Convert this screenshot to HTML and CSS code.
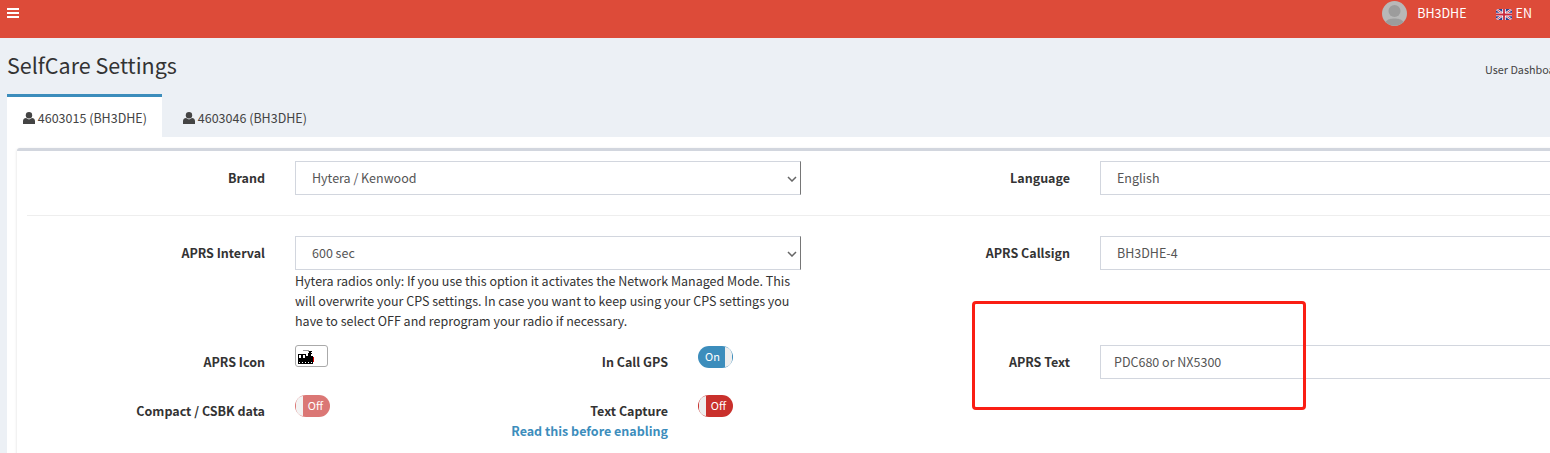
FILE: index.html
```html
<!DOCTYPE html>
<html lang="en">
<head>
<meta charset="utf-8">
<title>SelfCare Settings</title>
<link rel="stylesheet" href="styles.css">
</head>
<body>
<header class="navbar">
  <svg class="bars" viewBox="0 0 12 10" width="12" height="10"><path d="M0 0h12v2H0zM0 4h12v2H0zM0 8h12v2H0z" fill="#fff"/></svg>
  <div class="nav-right">
    <svg class="avatar" viewBox="0 0 25 25" width="25" height="25"><circle cx="12.500" cy="12.500" r="12.500" fill="#b8b8b8"/><circle cx="12.500" cy="10" r="6" fill="#9c9c9c"/><path d="M3.500 21c2-3 5.500-3.500 9-3.500s7 .5 9 3.500a12.500 12.500 0 0 1-18 0z" fill="#9c9c9c"/></svg>
    <span class="user">BH3DHE</span>
    <svg class="flag" viewBox="0 0 16 11" width="16" height="11"><rect width="16" height="11" fill="#2b3f8f"/><path d="M0 0l16 11M16 0L0 11" stroke="#fff" stroke-width="2.200"/><path d="M0 0l16 11M16 0L0 11" stroke="#c8283c" stroke-width=".9"/><path d="M8 0v11M0 5.500h16" stroke="#fff" stroke-width="3.500"/><path d="M8 0v11M0 5.500h16" stroke="#c8283c" stroke-width="1.800"/></svg>
    <span class="lang">EN</span>
  </div>
</header>

<section class="page-head">
  <h1>SelfCare Settings</h1>
  <span class="crumb">User Dashboard</span>
</section>

<nav class="tabs">
  <a class="tab active"><svg class="ico" viewBox="0 0 12 12" width="12" height="12"><circle cx="6" cy="3.200" r="3.200" fill="#444"/><path d="M0 12V9c0-2 1.500-3 3-3l3 1.500L9 6c1.500 0 3 1 3 3v3z" fill="#444"/></svg> 4603015 (BH3DHE)</a>
  <a class="tab"><svg class="ico" viewBox="0 0 12 12" width="12" height="12"><circle cx="6" cy="3.200" r="3.200" fill="#444"/><path d="M0 12V9c0-2 1.500-3 3-3l3 1.500L9 6c1.500 0 3 1 3 3v3z" fill="#444"/></svg> 4603046 (BH3DHE)</a>
</nav>

<main class="tab-content">
  <div class="box">
    <div class="row">
      <label class="lbl">Brand</label>
      <div class="select">Hytera / Kenwood<svg class="chev" viewBox="0 0 10 6" width="10" height="6"><path d="M1 1l4 4 4-4" fill="none" stroke="#666" stroke-width="1.500"/></svg></div>
      <label class="lbl">Language</label>
      <div class="input">English</div>
    </div>
    <hr class="sep">
    <div class="row">
      <label class="lbl">APRS Interval</label>
      <div class="select">600 sec<svg class="chev" viewBox="0 0 10 6" width="10" height="6"><path d="M1 1l4 4 4-4" fill="none" stroke="#666" stroke-width="1.500"/></svg></div>
      <label class="lbl">APRS Callsign</label>
      <div class="input">BH3DHE-4</div>
    </div>
    <div class="row row-help">
      <p class="help">Hytera radios only: If you use this option it activates the Network Managed Mode. This will overwrite your CPS settings. In case you want to keep using your CPS settings you have to select OFF and reprogram your radio if necessary.</p>
    </div>
    <div class="row row-last">
      <div class="nested">
        <label class="lbl cell-lbl">APRS Icon</label>
        <button class="icon-btn" type="button"><svg viewBox="0 0 16 16" width="16" height="16" shape-rendering="crispEdges"><path d="M5 1h6v1H5zM10 2h2v1h-2z" fill="#999"/><path d="M11 2h3v1h-1v1h1v1h-1v3h-3V4h1z" fill="#000"/><path d="M0 5h8v2h7v5H0z" fill="#000"/><path d="M1 6h2v3H1zM5 6h2v3H5z" fill="#fff"/><path d="M0 12h15v3H0z" fill="#000"/><path d="M1 13h1v1H1zM4 13h1v1H4zM7 13h1v1H7zM10 13h1v1h-1zM13 13h1v1h-1z" fill="#fff"/><path d="M15 8h1v5h-1z" fill="#d00"/></svg></button>
        <label class="lbl cell-lbl">In Call GPS</label>
        <div class="toggle on"><span class="tg-text">On</span><span class="knob"></span></div>
        <label class="lbl cell-lbl">Compact / CSBK data</label>
        <div class="toggle off faded"><span class="knob"></span><span class="tg-text">Off</span></div>
        <div class="lbl cell-lbl">Text Capture<a class="link">Read this before enabling</a></div>
        <div class="toggle off"><span class="knob"></span><span class="tg-text">Off</span></div>
      </div>
      <label class="lbl lbl-text">APRS Text</label>
      <div class="input input-tight">PDC680 or NX5300</div>
    </div>
  </div>
</main>

<div class="annotation"></div>
</body>
</html>
```

FILE: styles.css
```css
* { box-sizing: border-box; }
html, body { margin: 0; height: 453px; overflow: hidden; }
body {
  width: 1550px;
  background: #ecf0f5;
  color: #333;
  font-family: "Noto Sans CJK SC", "Source Sans Pro", "Open Sans", sans-serif;
  font-size: 12.5px;
  line-height: 20px;
}
.navbar {
  height: 38px;
  background: #dd4b39;
  display: flex;
  justify-content: space-between;
  color: #fff;
  padding: 8px 18px 0 7px;
}
.bars { display: block; }
.nav-right { display: flex; align-items: flex-start; margin-top: -8px; padding-top: 1px; height: 26px; }
.avatar { display: block; margin-right: 10px; }
.user { margin-right: 29px; line-height: 24px; }
.flag { margin-top: 8px; margin-right: 4px; }
.lang { line-height: 24px; }
.page-head { height: 56px; padding: 14px 0 0 7px; display: flex; justify-content: space-between; }
h1 { margin: 0; font-size: 21.5px; line-height: 26px; font-weight: 400; color: #333; }
.crumb { font-size: 10.8px; line-height: 16px; color: #444; width: 65px; margin-top: 9px; white-space: nowrap; }
.tabs { display: flex; margin-left: 7px; height: 43px; }
.tab { display: block; height: 43px; padding: 11px 16px 0; color: #444; border-top: 3px solid transparent; white-space: nowrap; }
.tab.active { background: #fff; border-top-color: #3c8dbc; width: 155px; }
.tab + .tab { padding-left: 21px; }
.ico { vertical-align: -1px; }
.tab-content { margin-left: 7px; background: #fff; padding: 11px 0 0 10px; height: 316px; }
.box {
  width: 1600px;
  height: 320px;
  border-top: 3px solid #d2d6de;
  border-radius: 3px;
  box-shadow: 0 1px 3px rgba(0,0,0,.15);
  padding: 10px 0 0 10px;
  background: #fff;
}
.row { display: grid; grid-template-columns: 238px 506px 239px 500px; column-gap: 30px; align-items: center; }
.lbl { text-align: right; font-weight: 700; color: #333; white-space: nowrap; }
.select, .input {
  height: 34px;
  border: 1px solid #d2d6de;
  padding: 6px 16px;
  color: #555;
  position: relative;
  background: #fff;
}
.input-tight { padding-left: 13px; }
.select { border-right-color: #767676; }
.chev { position: absolute; right: 3px; top: 14px; }
.sep { border: 0; border-top: 1px solid #eee; margin: 20px 0; width: 1570px; }
.row-help { margin-top: 1px; }
.help { margin: 0; grid-column: 2; color: #333; width: 506px; }
.row-last { margin-top: 14px; align-items: start; }
.nested {
  grid-column: 1 / 3;
  display: grid;
  grid-template-columns: 238px 33px 310px 35px;
  grid-template-rows: 49px 60px;
  column-gap: 30px;
  align-items: start;
}
.cell-lbl { padding-top: 7px; }
.link { display: block; color: #3c8dbc; }
.icon-btn {
  width: 33px;
  height: 22px;
  padding: 2px 0 0 2px;
  border: 1px solid #aaa;
  border-radius: 3px;
  background: #fff;
  display: block;
}
.icon-btn svg { display: block; }
.toggle {
  width: 35px;
  height: 22px;
  border-radius: 11px;
  display: flex;
  justify-content: space-between;
  overflow: hidden;
  color: #fff;
  font-size: 11px;
  line-height: 21px;
  margin-top: 1px;
}
.toggle.on { background: #3c8dbc; padding-left: 7px; }
.toggle.off { background: #c9302c; padding-right: 7px; }
.toggle.faded { opacity: .65; }
.knob { width: 7px; height: 20px; margin-top: 1px; background: #eee; }
.toggle.on .knob { border-radius: 0 10px 10px 0; margin-right: 1px; }
.toggle.off .knob { border-radius: 10px 0 0 10px; margin-left: 1px; }
.lbl-text { margin-top: 7px; }
.annotation {
  position: absolute;
  left: 972px;
  top: 301px;
  width: 334px;
  height: 109px;
  border: 3px solid #fa1e14;
  border-radius: 4px;
}
```
